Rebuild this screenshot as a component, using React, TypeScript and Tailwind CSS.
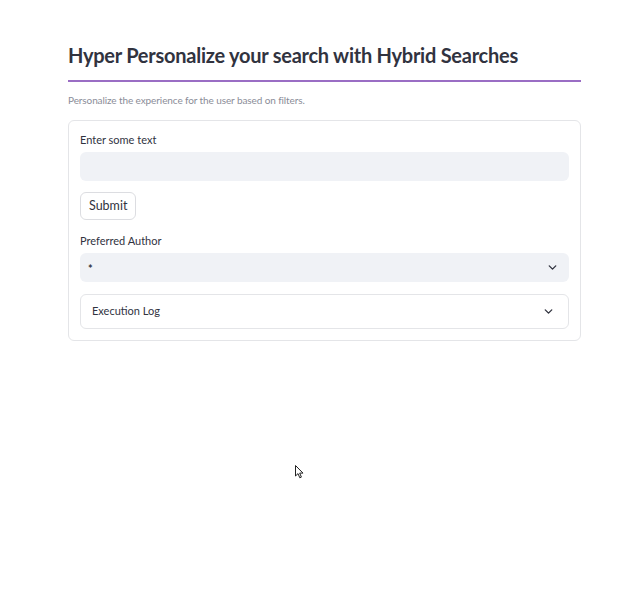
import { ChevronDown } from "lucide-react";

const FONT = { fontFamily: 'Lato, "Noto Sans", "Liberation Sans", sans-serif' };

const Cursor = () => (
  <svg width="10" height="14" viewBox="0 0 10 14" className="absolute left-[295px] top-[465px]">
    <path d="M0.5 0.5 L0.5 11 L3 8.6 L4.8 12.8 L6.4 12.1 L4.7 8.1 L8 8.1 Z" fill="#fff" stroke="#222" strokeWidth="1" />
  </svg>
);

const App = () => {
  return (
    <div className="relative w-[640px] h-[590px] bg-white text-[#31333f]" style={FONT}>
      <div className="pt-[40px] pl-[68px] w-[513px] box-content">
        <h1 className="text-[20px] font-bold leading-[30px] tracking-[-0.25px] text-[#31333f]">
          Hyper Personalize your search with Hybrid Searches
        </h1>
        <div className="mt-[10px] h-[2px] w-[513px] bg-[#9a6dc4]" />
        <p className="mt-[10px] text-[10px] leading-[16px] tracking-[-0.1px] text-[#8b8d98]">
          Personalize the experience for the user based on filters.
        </p>
        <div className="mt-[12px] w-[513px] rounded-[6px] border border-[#e4e5e8] px-[11px] pt-[11px] pb-[11px]">
          <label className="block text-[11px] leading-[16px] text-[#31333f]">Enter some text</label>
          <div className="mt-[4px] h-[29px] rounded-[6px] bg-[#f0f2f6]" />
          <button className="mt-[11px] h-[28px] px-[8px] rounded-[6px] border border-[#dcdde1] bg-white text-[12.5px] text-[#31333f]">
            Submit
          </button>
          <label className="mt-[13px] block text-[11px] leading-[16px] text-[#31333f]">Preferred Author</label>
          <div className="mt-[4px] h-[29px] rounded-[6px] bg-[#f0f2f6] flex items-center justify-between pl-[8px] pr-[10px]">
            <span className="pt-[4px] text-[11px] font-bold text-[#31333f]">*</span>
            <ChevronDown size={13} strokeWidth={2.5} className="text-[#31333f]" />
          </div>
          <div className="mt-[12px] h-[35px] rounded-[6px] border border-[#e4e5e8] flex items-center justify-between pl-[11px] pr-[13px]">
            <span className="text-[11px] text-[#31333f]">Execution Log</span>
            <ChevronDown size={13} strokeWidth={2.5} className="text-[#31333f]" />
          </div>
        </div>
      </div>
      <Cursor />
    </div>
  );
};

export default App;
